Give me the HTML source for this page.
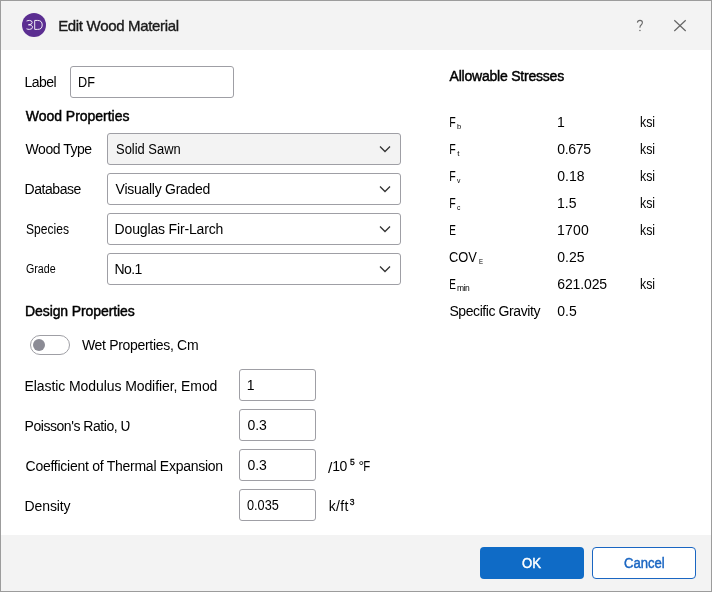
<!DOCTYPE html>
<html><head><meta charset="utf-8"><style>
html,body{margin:0;padding:0;}
body{width:712px;height:592px;position:relative;overflow:hidden;background:#fff;font-family:"Liberation Sans",sans-serif;}
.frame{position:absolute;left:0;top:0;width:710px;height:590px;border:1px solid #9c9c9c;background:#fff;}
.title{position:absolute;left:1px;top:1px;width:710px;height:49px;background:#f3f3f3;}
.footer{position:absolute;left:1px;top:535px;width:710px;height:56px;background:#f3f3f3;}
.t{position:absolute;white-space:nowrap;font-family:"Liberation Sans",sans-serif;}
.box{position:absolute;box-sizing:border-box;border:1px solid #9f9fa5;border-radius:3px;background:#fff;}
.chev{position:absolute;} .chev svg{display:block}
.icon{position:absolute;left:22px;top:13px;width:24px;height:24px;border-radius:50%;background:#5b2e91;}
</style></head><body>
<div class="frame"></div>
<div class="title"></div>
<div class="footer"></div>
<div class="icon"><svg width="24" height="24" viewBox="0 0 24 24" style="position:absolute;left:0;top:0">
<path d="M4.6 8.0 Q5.9 7.45 7.5 7.45 Q10.2 7.45 10.2 9.6 Q10.2 11.7 6.4 11.8 Q10.5 11.9 10.5 14.1 Q10.5 16.4 7.4 16.4 Q5.8 16.4 4.5 15.8" fill="none" stroke="#fff" stroke-width="0.9"/>
<path d="M12.7 7.45 H15.6 Q20.2 7.45 20.2 12.0 Q20.2 16.4 15.6 16.4 H12.7 Z" fill="none" stroke="#fff" stroke-width="0.9"/>
</svg></div>
<svg style="position:absolute;left:636px;top:19px" width="9" height="13" viewBox="0 0 9 13"><path d="M1.4 3.6 Q1.6 1.4 4 1.4 Q6.4 1.4 6.4 3.6 Q6.4 5.0 5.1 6.0 Q3.9 6.9 3.9 8.7" fill="none" stroke="#6a6a6a" stroke-width="1.1"/><circle cx="3.95" cy="11.6" r="0.75" fill="#6a6a6a"/></svg>
<svg style="position:absolute;left:673px;top:19px" width="14" height="13" viewBox="0 0 14 13"><path d="M1.3 1.2 L12.7 12 M12.7 1.2 L1.3 12" fill="none" stroke="#666" stroke-width="1.2"/></svg>

<div class="box" style="left:70px;top:66px;width:164px;height:32px;"></div>
<div class="box" style="left:107px;top:133px;width:294px;height:32px;background:#f3f3f3"></div>
<div class="box" style="left:107px;top:173px;width:294px;height:32px;"></div>
<div class="box" style="left:107px;top:213px;width:294px;height:32px;"></div>
<div class="box" style="left:107px;top:253px;width:294px;height:32px;"></div>
<div class="chev" style="left:379px;top:145px"><svg width="12" height="8" viewBox="0 0 12 8"><path d="M1 1.5 L6 6.5 L11 1.5" fill="none" stroke="#333" stroke-width="1.3"/></svg></div>
<div class="chev" style="left:379px;top:185px"><svg width="12" height="8" viewBox="0 0 12 8"><path d="M1 1.5 L6 6.5 L11 1.5" fill="none" stroke="#333" stroke-width="1.3"/></svg></div>
<div class="chev" style="left:379px;top:225px"><svg width="12" height="8" viewBox="0 0 12 8"><path d="M1 1.5 L6 6.5 L11 1.5" fill="none" stroke="#333" stroke-width="1.3"/></svg></div>
<div class="chev" style="left:379px;top:265px"><svg width="12" height="8" viewBox="0 0 12 8"><path d="M1 1.5 L6 6.5 L11 1.5" fill="none" stroke="#333" stroke-width="1.3"/></svg></div>

<div class="box" style="left:30px;top:335px;width:40px;height:20px;border-radius:10px;"></div>
<div style="position:absolute;left:33px;top:339px;width:12px;height:12px;border-radius:50%;background:#8b8b95"></div>

<div class="box" style="left:239px;top:369px;width:77px;height:32px;"></div>
<div class="box" style="left:239px;top:409px;width:77px;height:32px;"></div>
<div class="box" style="left:239px;top:449px;width:77px;height:32px;"></div>
<div class="box" style="left:239px;top:489px;width:77px;height:32px;"></div>

<div style="position:absolute;left:480px;top:547px;width:104px;height:32px;border-radius:4px;background:#0f6bc6"></div>
<div style="position:absolute;box-sizing:border-box;left:592px;top:547px;width:104px;height:32px;border-radius:4px;background:#fff;border:1px solid #1a66c2"></div>

<div style="position:absolute;left:0;top:0;width:712px;height:592px;will-change:transform">
<span class="t" style="left:58.17px;top:18.00px;font-size:15px;line-height:15px;color:#1a1a1a;letter-spacing:-0.321px;-webkit-text-stroke:0.35px #1a1a1a;">Edit Wood Material</span>
<span class="t" style="left:24.60px;top:75.00px;font-size:14px;line-height:14px;color:#000000;letter-spacing:-0.536px;">Label</span>
<span class="t" style="left:77.50px;top:75.00px;font-size:14px;line-height:14px;color:#000000;transform:scaleX(0.9059);transform-origin:1.00px 0;">DF</span>
<span class="t" style="left:25.83px;top:109.00px;font-size:14px;line-height:14px;color:#000000;letter-spacing:-0.033px;-webkit-text-stroke:0.45px #000000;">Wood Properties</span>
<span class="t" style="left:25.60px;top:142.00px;font-size:14px;line-height:14px;color:#000000;letter-spacing:-0.472px;">Wood Type</span>
<span class="t" style="left:115.60px;top:142.00px;font-size:14px;line-height:14px;color:#000000;transform:scaleX(0.9241);transform-origin:0.00px 0;">Solid Sawn</span>
<span class="t" style="left:24.60px;top:182.00px;font-size:14px;line-height:14px;color:#000000;letter-spacing:-0.449px;">Database</span>
<span class="t" style="left:115.60px;top:182.00px;font-size:14px;line-height:14px;color:#000000;letter-spacing:-0.271px;">Visually Graded</span>
<span class="t" style="left:25.60px;top:222.00px;font-size:14px;line-height:14px;color:#000000;transform:scaleX(0.8633);transform-origin:0.00px 0;">Species</span>
<span class="t" style="left:114.60px;top:222.00px;font-size:14px;line-height:14px;color:#000000;letter-spacing:-0.155px;">Douglas Fir-Larch</span>
<span class="t" style="left:25.60px;top:263.00px;font-size:12px;line-height:12px;color:#000000;transform:scaleX(0.8908);transform-origin:0.00px 0;">Grade</span>
<span class="t" style="left:114.60px;top:262.00px;font-size:14px;line-height:14px;color:#000000;letter-spacing:-0.595px;">No.1</span>
<span class="t" style="left:25.12px;top:304.00px;font-size:14px;line-height:14px;color:#000000;letter-spacing:-0.108px;-webkit-text-stroke:0.45px #000000;">Design Properties</span>
<span class="t" style="left:81.90px;top:338.00px;font-size:14px;line-height:14px;color:#000000;letter-spacing:-0.307px;">Wet Properties, Cm</span>
<span class="t" style="left:24.60px;top:379.00px;font-size:14px;line-height:14px;color:#000000;letter-spacing:-0.087px;">Elastic Modulus Modifier, Emod</span>
<span class="t" style="left:24.60px;top:419.00px;font-size:14px;line-height:14px;color:#000000;letter-spacing:-0.461px;">Poisson&#x27;s Ratio, Ʋ</span>
<span class="t" style="left:25.60px;top:459.00px;font-size:14px;line-height:14px;color:#000000;letter-spacing:-0.264px;">Coefficient of Thermal Expansion</span>
<span class="t" style="left:24.60px;top:499.00px;font-size:14px;line-height:14px;color:#000000;letter-spacing:-0.114px;">Density</span>
<span class="t" style="left:246.80px;top:378.00px;font-size:14px;line-height:14px;color:#000000;">1</span>
<span class="t" style="left:247.40px;top:418.00px;font-size:14px;line-height:14px;color:#000000;">0.3</span>
<span class="t" style="left:247.40px;top:458.00px;font-size:14px;line-height:14px;color:#000000;">0.3</span>
<span class="t" style="left:247.40px;top:498.00px;font-size:14px;line-height:14px;color:#000000;transform:scaleX(0.9079);transform-origin:0.00px 0;">0.035</span>
<span class="t" style="left:449.62px;top:69.00px;font-size:14px;line-height:14px;color:#000000;letter-spacing:-0.219px;-webkit-text-stroke:0.45px #000000;">Allowable Stresses</span>
<span class="t" style="left:449.40px;top:304.00px;font-size:14px;line-height:14px;color:#000000;letter-spacing:-0.417px;">Specific Gravity</span>
<span class="t" style="left:522.43px;top:556.00px;font-size:14px;line-height:14px;color:#ffffff;transform:scaleX(0.9372);transform-origin:-0.23px 0;-webkit-text-stroke:0.45px #ffffff;">OK</span>
<span class="t" style="left:623.62px;top:556.00px;font-size:14px;line-height:14px;color:#1a66c2;transform:scaleX(0.9335);transform-origin:-0.23px 0;-webkit-text-stroke:0.45px #1a66c2;">Cancel</span>
<span class="t" style="left:328.10px;top:459.60px;font-size:15.5px;line-height:15.5px;color:#000000;">/</span>
<span class="t" style="left:332.30px;top:459.00px;font-size:14px;line-height:14px;color:#000000;letter-spacing:-0.586px;">10</span>
<span class="t" style="left:358.50px;top:459.00px;font-size:14px;line-height:14px;color:#000000;">°</span>
<span class="t" style="left:362.80px;top:459.00px;font-size:14px;line-height:14px;color:#000000;transform:scaleX(0.8143);transform-origin:1.00px 0;">F</span>
<span class="t" style="left:328.80px;top:499.00px;font-size:14px;line-height:14px;color:#000000;letter-spacing:0.274px;">k/ft</span>
<span class="t" style="left:350.05px;top:458.00px;font-size:8.5px;line-height:8.5px;color:#000000;-webkit-text-stroke:0.3px #000000;">5</span>
<span class="t" style="left:349.85px;top:498.20px;font-size:8.5px;line-height:8.5px;color:#000000;-webkit-text-stroke:0.3px #000000;">3</span>
<span class="t" style="left:557.00px;top:115.00px;font-size:14px;line-height:14px;color:#000000;">1</span>
<span class="t" style="left:557.30px;top:142.00px;font-size:14px;line-height:14px;color:#000000;letter-spacing:-0.312px;">0.675</span>
<span class="t" style="left:557.30px;top:169.00px;font-size:14px;line-height:14px;color:#000000;">0.18</span>
<span class="t" style="left:557.00px;top:196.00px;font-size:14px;line-height:14px;color:#000000;">1.5</span>
<span class="t" style="left:557.00px;top:223.00px;font-size:14px;line-height:14px;color:#000000;letter-spacing:0.214px;">1700</span>
<span class="t" style="left:557.30px;top:250.00px;font-size:14px;line-height:14px;color:#000000;">0.25</span>
<span class="t" style="left:557.30px;top:277.00px;font-size:14px;line-height:14px;color:#000000;letter-spacing:-0.137px;">621.025</span>
<span class="t" style="left:557.30px;top:304.00px;font-size:14px;line-height:14px;color:#000000;">0.5</span>
<span class="t" style="left:639.50px;top:115.00px;font-size:14px;line-height:14px;color:#000000;transform:scaleX(0.8824);transform-origin:0.00px 0;">ksi</span>
<span class="t" style="left:639.50px;top:142.00px;font-size:14px;line-height:14px;color:#000000;transform:scaleX(0.8824);transform-origin:0.00px 0;">ksi</span>
<span class="t" style="left:639.50px;top:169.00px;font-size:14px;line-height:14px;color:#000000;transform:scaleX(0.8824);transform-origin:0.00px 0;">ksi</span>
<span class="t" style="left:639.50px;top:196.00px;font-size:14px;line-height:14px;color:#000000;transform:scaleX(0.8824);transform-origin:0.00px 0;">ksi</span>
<span class="t" style="left:639.50px;top:223.00px;font-size:14px;line-height:14px;color:#000000;transform:scaleX(0.8824);transform-origin:0.00px 0;">ksi</span>
<span class="t" style="left:639.50px;top:277.00px;font-size:14px;line-height:14px;color:#000000;transform:scaleX(0.8824);transform-origin:0.00px 0;">ksi</span>
<span class="t" style="left:449.10px;top:115.00px;font-size:14px;line-height:14px;color:#000000;transform:scaleX(0.7571);transform-origin:1.00px 0;">F</span>
<span class="t" style="left:449.10px;top:142.00px;font-size:14px;line-height:14px;color:#000000;transform:scaleX(0.7571);transform-origin:1.00px 0;">F</span>
<span class="t" style="left:449.10px;top:169.00px;font-size:14px;line-height:14px;color:#000000;transform:scaleX(0.7571);transform-origin:1.00px 0;">F</span>
<span class="t" style="left:449.10px;top:196.00px;font-size:14px;line-height:14px;color:#000000;transform:scaleX(0.7571);transform-origin:1.00px 0;">F</span>
<span class="t" style="left:448.80px;top:223.00px;font-size:14px;line-height:14px;color:#000000;transform:scaleX(0.7125);transform-origin:1.00px 0;">E</span>
<span class="t" style="left:449.40px;top:250.00px;font-size:14px;line-height:14px;color:#000000;transform:scaleX(0.9194);transform-origin:0.00px 0;">COV</span>
<span class="t" style="left:448.80px;top:277.00px;font-size:14px;line-height:14px;color:#000000;transform:scaleX(0.7125);transform-origin:1.00px 0;">E</span>
<span class="t" style="left:457.10px;top:123.00px;font-size:8px;line-height:8px;color:#000000;transform:scaleX(0.9400);transform-origin:0.00px 0;">b</span>
<span class="t" style="left:457.20px;top:150.00px;font-size:8px;line-height:8px;color:#000000;">t</span>
<span class="t" style="left:457.20px;top:177.30px;font-size:8px;line-height:8px;color:#000000;transform:scaleX(0.8500);transform-origin:0.00px 0;">v</span>
<span class="t" style="left:457.20px;top:204.10px;font-size:8px;line-height:8px;color:#000000;transform:scaleX(0.8500);transform-origin:0.00px 0;">c</span>
<span class="t" style="left:479.40px;top:258.00px;font-size:8px;line-height:8px;color:#000000;transform:scaleX(0.7600);transform-origin:0.00px 0;">E</span>
<span class="t" style="left:457.10px;top:283.70px;font-size:8.5px;line-height:8.5px;color:#000000;letter-spacing:-0.484px;">min</span>
</div>
</body></html>
